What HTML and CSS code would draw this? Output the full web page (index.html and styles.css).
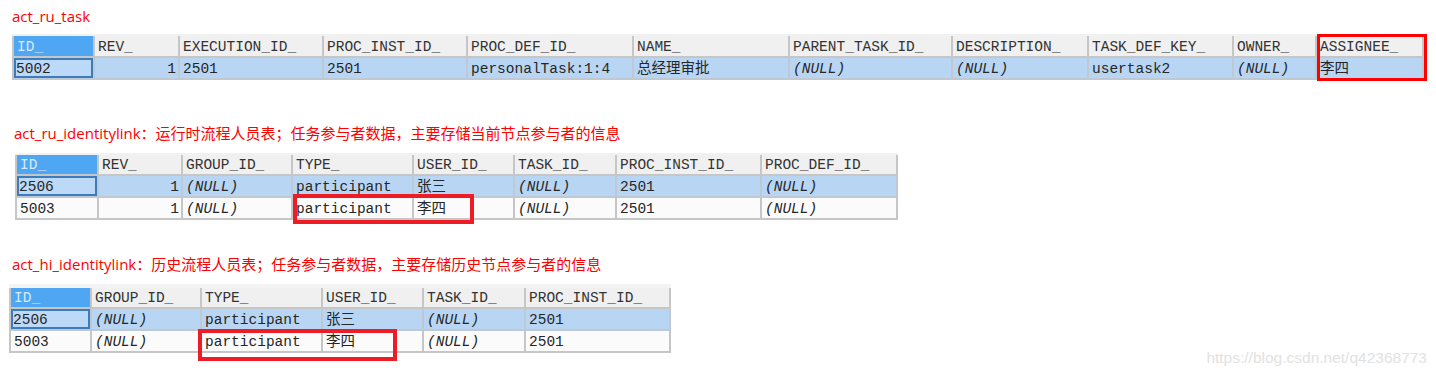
FILE: index.html
```html
<!DOCTYPE html>
<html lang="zh-CN">
<head>
<meta charset="utf-8">
<title>act tables</title>
<link rel="stylesheet" href="styles.css">
</head>
<body>
<div class="page">
  <div class="title t1-title">act_ru_task</div>
  <div class="tbl tbl1">
    <div class="strip"></div>
    <div class="grid g1">
      <div class="row head hd22">
        <div class="c idh">ID_</div><div class="c">REV_</div><div class="c">EXECUTION_ID_</div><div class="c">PROC_INST_ID_</div><div class="c">PROC_DEF_ID_</div><div class="c">NAME_</div><div class="c">PARENT_TASK_ID_</div><div class="c">DESCRIPTION_</div><div class="c">TASK_DEF_KEY_</div><div class="c">OWNER_</div><div class="c">ASSIGNEE_</div>
      </div>
      <div class="row sel">
        <div class="c cur">5002</div><div class="c num">1</div><div class="c">2501</div><div class="c">2501</div><div class="c">personalTask:1:4</div><div class="c">总经理审批</div><div class="c nul">(NULL)</div><div class="c nul">(NULL)</div><div class="c">usertask2</div><div class="c nul">(NULL)</div><div class="c">李四</div>
      </div>
    </div>
    <div class="mark box1"></div>
  </div>

  <div class="title t2-title">act_ru_identitylink：运行时流程人员表；任务参与者数据，主要存储当前节点参与者的信息</div>
  <div class="tbl tbl2">
    <div class="strip"></div>
    <div class="grid g2">
      <div class="row head hd20">
        <div class="c idh">ID_</div><div class="c">REV_</div><div class="c">GROUP_ID_</div><div class="c">TYPE_</div><div class="c">USER_ID_</div><div class="c">TASK_ID_</div><div class="c">PROC_INST_ID_</div><div class="c">PROC_DEF_ID_</div>
      </div>
      <div class="row sel">
        <div class="c cur">2506</div><div class="c num">1</div><div class="c nul">(NULL)</div><div class="c">participant</div><div class="c">张三</div><div class="c nul">(NULL)</div><div class="c">2501</div><div class="c nul">(NULL)</div>
      </div>
      <div class="row plain">
        <div class="c">5003</div><div class="c num">1</div><div class="c nul">(NULL)</div><div class="c">participant</div><div class="c">李四</div><div class="c nul">(NULL)</div><div class="c">2501</div><div class="c nul">(NULL)</div>
      </div>
    </div>
    <div class="mark box2"></div>
  </div>

  <div class="title t3-title">act_hi_identitylink：历史流程人员表；任务参与者数据，主要存储历史节点参与者的信息</div>
  <div class="tbl tbl3">
    <div class="strip strip4"></div>
    <div class="grid g3">
      <div class="row head hd20">
        <div class="c idh">ID_</div><div class="c">GROUP_ID_</div><div class="c">TYPE_</div><div class="c">USER_ID_</div><div class="c">TASK_ID_</div><div class="c">PROC_INST_ID_</div>
      </div>
      <div class="row sel">
        <div class="c cur">2506</div><div class="c nul">(NULL)</div><div class="c">participant</div><div class="c">张三</div><div class="c nul">(NULL)</div><div class="c">2501</div>
      </div>
      <div class="row plain">
        <div class="c">5003</div><div class="c nul">(NULL)</div><div class="c">participant</div><div class="c">李四</div><div class="c nul">(NULL)</div><div class="c">2501</div>
      </div>
    </div>
    <div class="mark box3"></div>
  </div>
</div>
<div class="watermark">https://blog.csdn.net/q42368773</div>
</body>
</html>
```

FILE: styles.css
```css
html, body {
  margin: 0;
  padding: 0;
  background: #ffffff;
}
body {
  width: 1436px;
  height: 377px;
  position: relative;
  overflow: hidden;
}
.page {
  padding-top: 6px;
}
.title {
  font-family: "Open Sans", "Noto Sans CJK SC", sans-serif;
  font-size: 15px;
  line-height: 20px;
  height: 20px;
  color: #ff0000;
  white-space: nowrap;
}
.t1-title { margin-left: 12px; }
.t2-title { margin-left: 14px; margin-top: 43px; }
.t3-title { margin-left: 12px; margin-top: 34px; }

.tbl {
  position: relative;
  width: max-content;
}
.tbl1 { margin-left: 12px; margin-top: 8px; }
.tbl2 { margin-left: 15px; margin-top: 10px; }
.tbl3 { margin-left: 9px; margin-top: 10px; }

.strip {
  height: 2px;
  background: #f1f1f1;
}
.strip4 {
  height: 4px;
  background: #f4f4f4;
}

.grid {
  display: grid;
  border-left: 2px solid #c6c6c6;
  font-family: "Liberation Mono", "Noto Sans CJK SC", monospace;
  font-size: 14.5px;
  color: #262626;
}
.g1 { grid-template-columns: 81px 85px 144px 144px 166px 156px 163px 136px 145px 83px 107px; }
.g2 { grid-template-columns: 82px 84px 110px 121px 101px 102px 145px 136px; }
.g3 { grid-template-columns: 81px 110px 121px 101px 102px 145px; }

.row { display: contents; }
.c {
  box-sizing: border-box;
  height: 22px;
  line-height: 18px;
  padding: 2px 3px 0;
  border-right: 2px solid #c6c6c6;
  border-bottom: 2px solid #c6c6c6;
  white-space: nowrap;
}
.hd22 > .c { height: 22px; }
.hd20 > .c { height: 21px; padding-top: 2px; line-height: 17px; }
.head > .c {
  background: #f0f0f0;
  color: #333333;
}
.head > .idh {
  background: #4fa7f4;
  color: #d6ebff;
}
.sel > .c {
  background: #b8d6f4;
  border-right-color: #bfc9d3;
  border-bottom-color: #bfc9d3;
}
.sel > .cur {
  background: #bcd9f7;
  box-shadow: inset 0 0 0 2px #3c7cbd;
  padding-left: 2px;
}
.plain > .c {
  background: #fbfbfb;
}
.num { text-align: right; padding-right: 2px; }
.nul { font-style: italic; }

.mark {
  position: absolute;
  box-sizing: border-box;
  border: 3px solid #ee1c25;
}
.box1 { left: 1305px; top: 0; width: 110px; height: 47px; border-color: #ff0000; }
.box2 { left: 278px; top: 41px; width: 181px; height: 30px; border-width: 4px; }
.box3 { left: 189px; top: 45px; width: 199px; height: 32px; border-width: 4px; }

.watermark {
  position: absolute;
  right: 9px;
  top: 348px;
  font-family: "Liberation Sans", Arial, sans-serif;
  font-size: 15.5px;
  line-height: 20px;
  color: #e2e2e2;
}
```
